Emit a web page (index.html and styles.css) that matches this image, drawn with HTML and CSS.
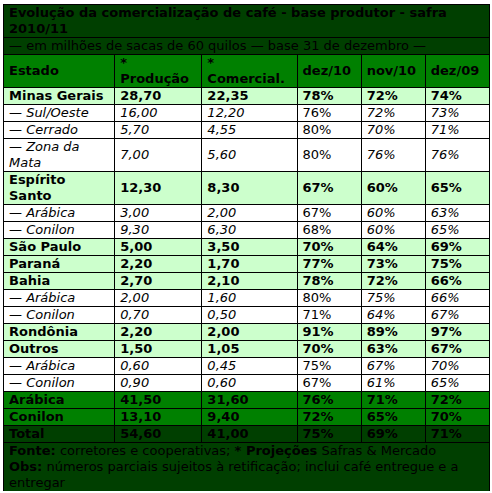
FILE: index.html
```html
<!DOCTYPE html>
<html lang="pt-BR">
<head>
    <meta charset="UTF-8">
    <title>Evolução da comercialização de café</title>
    <link rel="stylesheet" href="styles.css">
</head>
<body>
    <table class="cafe">
        <colgroup>
            <col class="c-estado">
            <col class="c-prod">
            <col class="c-com">
            <col class="c-pct">
            <col class="c-pct">
            <col class="c-pct">
        </colgroup>
        <tr class="title">
            <td colspan="6"><b>Evolução da comercialização de café - base produtor - safra 2010/11</b></td>
        </tr>
        <tr class="title">
            <td colspan="6">— em milhões de sacas de 60 quilos — base 31 de dezembro —</td>
        </tr>
        <tr class="head">
            <td>Estado</td>
            <td>*<br>Produção</td>
            <td>*<br>Comercial.</td>
            <td>dez/10</td>
            <td>nov/10</td>
            <td>dez/09</td>
        </tr>

        <tr class="state"><td>Minas Gerais</td><td>28,70</td><td>22,35</td><td>78%</td><td>72%</td><td>74%</td></tr>
        <tr class="sub"><td>— Sul/Oeste</td><td>16,00</td><td>12,20</td><td class="up">76%</td><td>72%</td><td>73%</td></tr>
        <tr class="sub"><td>— Cerrado</td><td>5,70</td><td>4,55</td><td class="up">80%</td><td>70%</td><td>71%</td></tr>
        <tr class="sub"><td>— Zona da Mata</td><td>7,00</td><td>5,60</td><td class="up">80%</td><td>76%</td><td>76%</td></tr>

        <tr class="state"><td>Espírito Santo</td><td>12,30</td><td>8,30</td><td>67%</td><td>60%</td><td>65%</td></tr>
        <tr class="sub"><td>— Arábica</td><td>3,00</td><td>2,00</td><td class="up">67%</td><td>60%</td><td>63%</td></tr>
        <tr class="sub"><td>— Conilon</td><td>9,30</td><td>6,30</td><td class="up">68%</td><td>60%</td><td>65%</td></tr>

        <tr class="state"><td>São Paulo</td><td>5,00</td><td>3,50</td><td>70%</td><td>64%</td><td>69%</td></tr>
        <tr class="state"><td>Paraná</td><td>2,20</td><td>1,70</td><td>77%</td><td>73%</td><td>75%</td></tr>

        <tr class="state"><td>Bahia</td><td>2,70</td><td>2,10</td><td>78%</td><td>72%</td><td>66%</td></tr>
        <tr class="sub"><td>— Arábica</td><td>2,00</td><td>1,60</td><td class="up">80%</td><td>75%</td><td>66%</td></tr>
        <tr class="sub"><td>— Conilon</td><td>0,70</td><td>0,50</td><td class="up">71%</td><td>64%</td><td>67%</td></tr>

        <tr class="state"><td>Rondônia</td><td>2,20</td><td>2,00</td><td>91%</td><td>89%</td><td>97%</td></tr>

        <tr class="state"><td>Outros</td><td>1,50</td><td>1,05</td><td>70%</td><td>63%</td><td>67%</td></tr>
        <tr class="sub"><td>— Arábica</td><td>0,60</td><td>0,45</td><td class="up">75%</td><td>67%</td><td>70%</td></tr>
        <tr class="sub"><td>— Conilon</td><td>0,90</td><td>0,60</td><td class="up">67%</td><td>61%</td><td>65%</td></tr>

        <tr class="total"><td>Arábica</td><td>41,50</td><td>31,60</td><td>76%</td><td>71%</td><td>72%</td></tr>
        <tr class="total"><td>Conilon</td><td>13,10</td><td>9,40</td><td>72%</td><td>65%</td><td>70%</td></tr>
        <tr class="grand"><td>Total</td><td>54,60</td><td>41,00</td><td>75%</td><td>69%</td><td>71%</td></tr>

        <tr class="foot">
            <td colspan="6"><b>Fonte:</b> corretores e cooperativas; <b>* Projeções</b> Safras &amp; Mercado<br><b>Obs:</b> números parciais sujeitos à retificação; inclui café entregue e a entregar</td>
        </tr>
    </table>
</body>
</html>
```

FILE: styles.css
```css
body {
    margin: 0;
    padding: 4px 0 0 3px;
    background-color: #ffffff;
    font-family: "DejaVu Sans", Verdana, sans-serif;
    font-size: 13px;
    color: #000000;
}
.cafe {
    border-collapse: collapse;
    table-layout: fixed;
    width: 487px;
    line-height: 16px;
}
.cafe td {
    border: 1px solid #000000;
    padding: 0 4px 0 5px;
    vertical-align: middle;
    text-align: left;
}
.c-estado {
    width: 111px;
}
.c-prod {
    width: 87px;
}
.c-com {
    width: 95px;
}
.c-pct {
    width: 64px;
}
.title td,
.foot td {
    background-color: #003f00;
    padding-left: 5px;
}
.title td {
    padding-top: 0;
}
.head td {
    background-color: #008000;
    font-weight: bold;
}
.state td {
    background-color: #ccffcc;
    font-weight: bold;
}
.sub td {
    background-color: #ffffff;
    font-style: italic;
}
.sub td.up {
    font-style: normal;
}
.total td {
    background-color: #008000;
    font-weight: bold;
}
.grand td {
    background-color: #003f00;
    font-weight: bold;
}
.foot td {
    border-bottom: none;
}
```
